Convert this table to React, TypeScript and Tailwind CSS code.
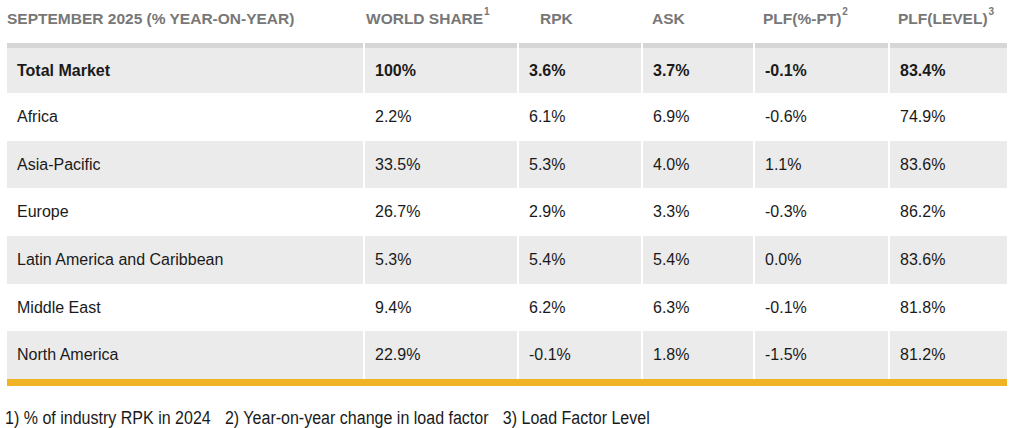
const rows = [
  { name: "Africa", share: "2.2%", rpk: "6.1%", ask: "6.9%", plf: "-0.6%", level: "74.9%" },
  { name: "Asia-Pacific", share: "33.5%", rpk: "5.3%", ask: "4.0%", plf: "1.1%", level: "83.6%" },
  { name: "Europe", share: "26.7%", rpk: "2.9%", ask: "3.3%", plf: "-0.3%", level: "86.2%" },
  { name: "Latin America and Caribbean", share: "5.3%", rpk: "5.4%", ask: "5.4%", plf: "0.0%", level: "83.6%" },
  { name: "Middle East", share: "9.4%", rpk: "6.2%", ask: "6.3%", plf: "-0.1%", level: "81.8%" },
  { name: "North America", share: "22.9%", rpk: "-0.1%", ask: "1.8%", plf: "-1.5%", level: "81.2%" },
];

const cols = "grid grid-cols-[356px_152px_122px_110px_133px_117px] gap-x-[2px]";

export default function App() {
  return (
    <div className="w-[1009px] h-[428px] bg-white font-['Liberation_Sans',Arial,sans-serif] text-[#1a1a1a]">
      <div className="ml-[7px] w-[1000px]">
        <div className={`${cols} h-[43px] items-start pt-[7px] text-[15.5px] font-bold text-[#777777] uppercase whitespace-nowrap`}>
          <div>September 2025 (% year-on-year)</div>
          <div className="pl-[1px]">
            World share<sup className="text-[10px] align-[4px] ml-[1px]">1</sup>
          </div>
          <div className="pl-[21px]">RPK</div>
          <div className="pl-[9px]">ASK</div>
          <div className="pl-[8px]">
            PLF(%-PT)<sup className="text-[10px] align-[4px] ml-[1px]">2</sup>
          </div>
          <div className="pl-[8px]">
            PLF(LEVEL)<sup className="text-[10px] align-[4px] ml-[1px]">3</sup>
          </div>
        </div>

        <div className={`${cols} text-[16px] font-bold`}>
          {["Total Market", "100%", "3.6%", "3.7%", "-0.1%", "83.4%"].map((v) => (
            <div key={v} className="h-[50px] border-t-[5px] border-[#d6d6d6] bg-[#ebebeb] flex items-center pl-[10px] pr-2">
              {v}
            </div>
          ))}
        </div>

        {rows.map((r, i) => (
          <div key={r.name} className={`${cols} text-[16px]`}>
            {[r.name, r.share, r.rpk, r.ask, r.plf, r.level].map((v, j) => (
              <div
                key={j}
                className={`h-[47.7px] flex items-center pl-[10px] pr-2 ${i % 2 === 1 ? "bg-[#ebebeb]" : "bg-white"}`}
              >
                {v}
              </div>
            ))}
          </div>
        ))}

        <div className="h-[7px] bg-[#f0b323]" />

        <div className="mt-[20px] -ml-[2px] text-[18px] leading-[24px] origin-left scale-x-[0.89] text-[#1a1a1a] whitespace-nowrap">
          1) % of industry RPK in 2024<span className="ml-[16px]">2) Year-on-year change in load factor</span>
          <span className="ml-[16px]">3) Load Factor Level</span>
        </div>
      </div>
    </div>
  );
}
